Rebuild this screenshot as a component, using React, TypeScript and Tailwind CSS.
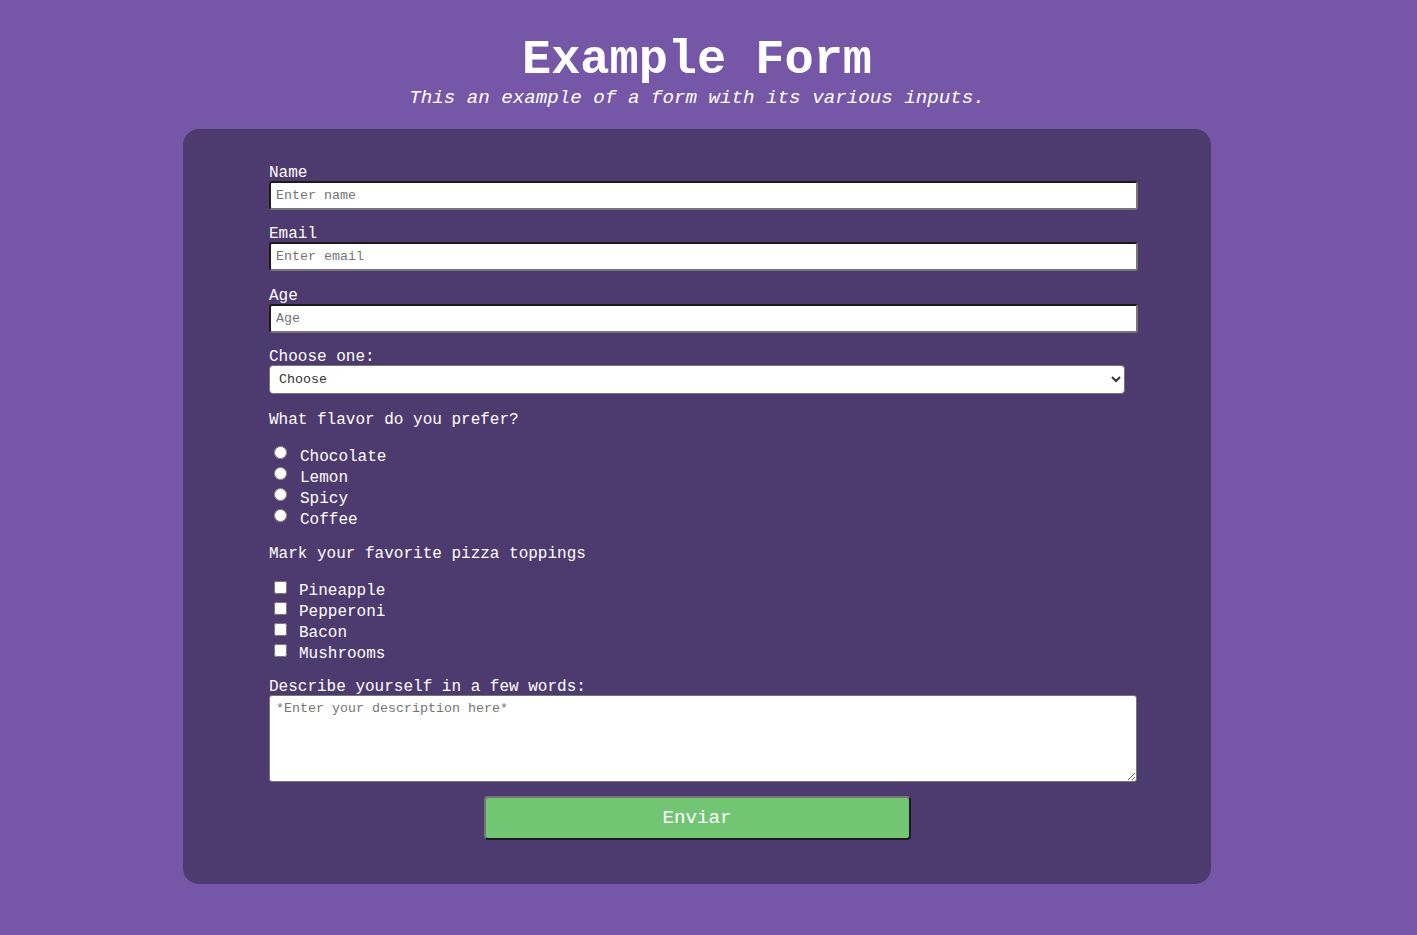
import React from "react";

const font = "font-['Liberation_Mono','Courier_New',monospace]";

function Field({ label, placeholder, type = "text" }: { label: string; placeholder: string; type?: string }) {
  return (
    <div className="mb-[13.33px]">
      <label className="block pt-[3px] text-[16px] leading-[16px] text-white">{label}</label>
      <input
        type={type}
        placeholder={placeholder}
        className={`block h-[29px] w-[869px] rounded-[3px] border-2 border-t-[#1b1b1b] border-l-[#1b1b1b] border-r-[#767676] border-b-[#767676] bg-white px-[5px] text-[13.33px] text-black placeholder:text-[#757575] outline-none ${font}`}
      />
    </div>
  );
}

export default function App() {
  const flavors = ["Chocolate", "Lemon", "Spicy", "Coffee"];
  const toppings = ["Pineapple", "Pepperoni", "Bacon", "Mushrooms"];
  return (
    <div className={`min-h-screen w-full bg-[#7657a7] ${font}`}>
      <div className="w-[1394px] pt-[34px] pb-[51px]">
        <h1 className="text-center text-[48.6px] font-bold leading-[54px] text-white">Example Form</h1>
        <p className="text-center text-[19.2px] italic leading-[20px] text-white">
          This an example of a form with its various inputs.
        </p>
        <form
          className="mx-auto mt-[21px] w-[1028px] rounded-[16px] bg-[#4d3a6e] px-[86px] pt-[33px] pb-[44px]"
          onSubmit={(e) => e.preventDefault()}
        >
          <Field label="Name" placeholder="Enter name" />
          <Field label="Email" placeholder="Enter email" type="email" />
          <Field label="Age" placeholder="Age" />
          <div>
            <label className="block pt-[3px] text-[16px] leading-[16px] text-white">Choose one:</label>
            <select
              defaultValue=""
              className={`block h-[29px] w-[856px] rounded-[4px] border border-[#767676] bg-white pl-[5px] text-[13.33px] text-[#333] ${font}`}
            >
              <option value="" disabled>
                Choose
              </option>
              <option>Option 1</option>
              <option>Option 2</option>
            </select>
          </div>
          <p className="mt-[17px] text-[16px] leading-[18px] text-white">What flavor do you prefer?</p>
          <div className="mt-[18px]">
            {flavors.map((f) => (
              <label key={f} className="flex h-[21px] items-center text-[16px] text-white">
                <input type="radio" name="flavor" className="mb-[10px] ml-[5px] mr-[13px] h-[13px] w-[13px]" />
                {f}
              </label>
            ))}
          </div>
          <p className="mt-[14px] text-[16px] leading-[18px] text-white">Mark your favorite pizza toppings</p>
          <div className="mt-[18px]">
            {toppings.map((t) => (
              <label key={t} className="flex h-[21px] items-center text-[16px] text-white">
                <input type="checkbox" className="mb-[8px] ml-[5px] mr-[12px] h-[13px] w-[13px]" />
                {t}
              </label>
            ))}
          </div>
          <label className="mt-[11px] block pt-[3px] text-[16px] leading-[16px] text-white">
            Describe yourself in a few words:
          </label>
          <textarea
            placeholder="*Enter your description here*"
            className={`block h-[87px] w-[868px] rounded-[3px] border border-[#767676] bg-white px-[6px] pt-[5px] text-[13.33px] leading-[15px] text-black placeholder:text-[#757575] ${font}`}
          />
          <div className="mt-[14px] flex justify-center">
            <button
              type="submit"
              className={`h-[44px] w-[427px] rounded-[4px] border-2 border-t-[#767676] border-l-[#767676] border-r-[#1b1b1b] border-b-[#1b1b1b] bg-[#72c572] text-[19.2px] text-white ${font}`}
            >
              Enviar
            </button>
          </div>
        </form>
      </div>
    </div>
  );
}
